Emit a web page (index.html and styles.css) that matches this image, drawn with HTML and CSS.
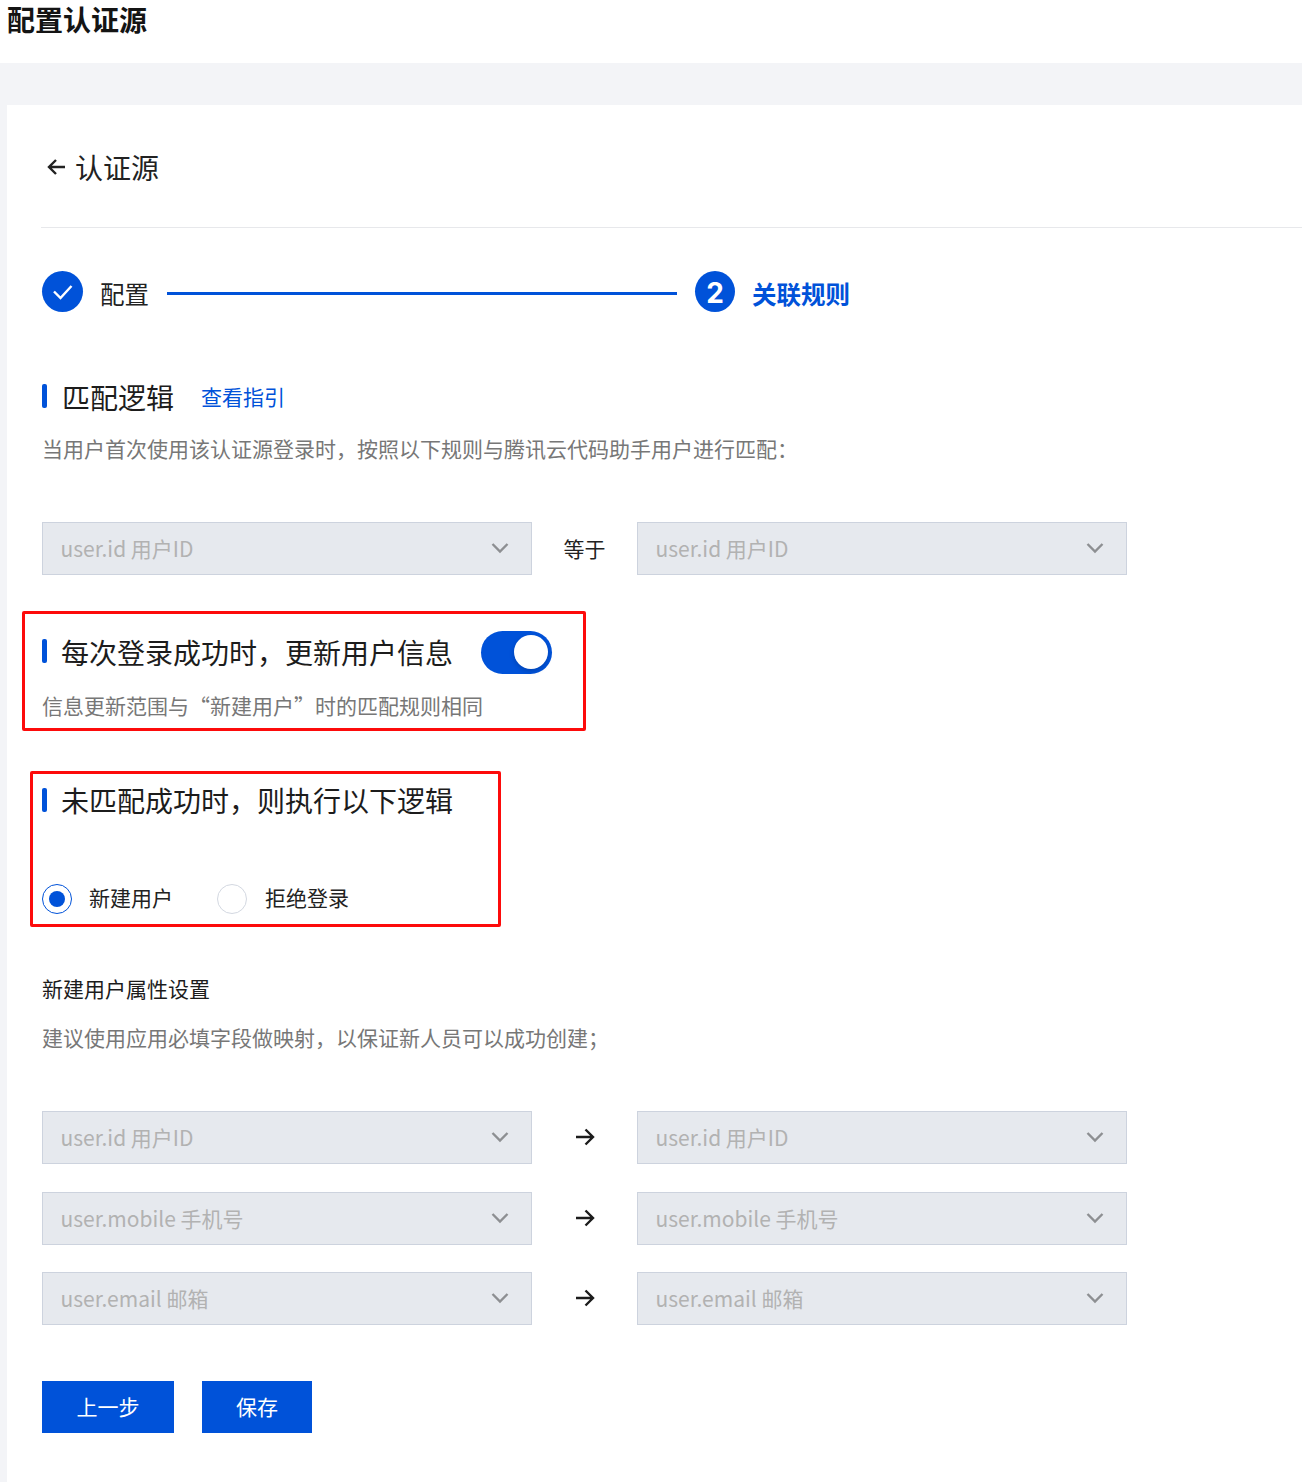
FILE: index.html
```html
<!DOCTYPE html>
<html lang="zh-CN">
<head>
<meta charset="utf-8">
<title>配置认证源</title>
<link rel="stylesheet" href="styles.css">
</head>
<body>
<header class="page-head"><h1 class="page-title">配置认证源</h1></header>
<main class="shell">
  <div class="card">
    <div class="back-row">
      <svg class="back-icon" viewBox="0 0 20 20" width="20" height="20"><path d="M19 10H2.500M10 3L3 10l7 7" fill="none" stroke="#222" stroke-width="2.400"/></svg>
      <span class="back-text">认证源</span>
    </div>
    <div class="steps">
      <span class="step-dot"><svg viewBox="0 0 41 41" width="41" height="41"><path d="M12 20.500l6.500 6.500L29.500 15" fill="none" stroke="#fff" stroke-width="2.400"/></svg></span>
      <span class="step-label">配置</span>
      <span class="step-line"></span>
      <span class="step-dot step-num">2</span>
      <span class="step-label step-active">关联规则</span>
    </div>

    <div class="section-head first-head">
      <span class="bar"></span><h2 class="section-title">匹配逻辑</h2><a class="guide">查看指引</a>
    </div>
    <p class="desc desc-match">当用户首次使用该认证源登录时，按照以下规则与腾讯云代码助手用户进行匹配：</p>
    <div class="map-row row-match">
      <div class="select"><span>user.id 用户ID</span><svg class="chev" viewBox="0 0 18 12" width="18" height="12"><path d="M1.500 2l7.500 7.500L16.500 2" /></svg></div>
      <span class="map-op op-text">等于</span>
      <div class="select"><span>user.id 用户ID</span><svg class="chev" viewBox="0 0 18 12" width="18" height="12"><path d="M1.500 2l7.500 7.500L16.500 2" /></svg></div>
    </div>

    <section class="update-block">
      <div class="section-head">
        <span class="bar"></span><h2 class="section-title">每次登录成功时，更新用户信息</h2><span class="toggle"><span class="knob"></span></span>
      </div>
      <p class="desc desc-update">信息更新范围与“新建用户”时的匹配规则相同</p>
      <span class="mark mark-update"></span>
    </section>

    <section class="fail-block">
      <div class="section-head">
        <span class="bar"></span><h2 class="section-title">未匹配成功时，则执行以下逻辑</h2>
      </div>
      <div class="radios">
        <span class="radio radio-on"></span><span class="radio-text">新建用户</span>
        <span class="radio radio-off"></span><span class="radio-text">拒绝登录</span>
      </div>
      <span class="mark mark-fail"></span>
    </section>

    <h3 class="sub-title">新建用户属性设置</h3>
    <p class="desc desc-attr">建议使用应用必填字段做映射，以保证新人员可以成功创建；</p>

    <div class="map-list">
      <div class="map-row">
        <div class="select"><span>user.id 用户ID</span><svg class="chev" viewBox="0 0 18 12" width="18" height="12"><path d="M1.500 2l7.500 7.500L16.500 2" /></svg></div>
        <span class="map-op"><svg class="arrow" viewBox="0 0 20 18" width="20" height="18"><path d="M1 9h17M10.500 1.500L18 9l-7.500 7.500" fill="none" stroke="#1c1c1c" stroke-width="2.400"/></svg></span>
        <div class="select"><span>user.id 用户ID</span><svg class="chev" viewBox="0 0 18 12" width="18" height="12"><path d="M1.500 2l7.500 7.500L16.500 2" /></svg></div>
      </div>
      <div class="map-row">
        <div class="select"><span>user.mobile 手机号</span><svg class="chev" viewBox="0 0 18 12" width="18" height="12"><path d="M1.500 2l7.500 7.500L16.500 2" /></svg></div>
        <span class="map-op"><svg class="arrow" viewBox="0 0 20 18" width="20" height="18"><path d="M1 9h17M10.500 1.500L18 9l-7.500 7.500" fill="none" stroke="#1c1c1c" stroke-width="2.400"/></svg></span>
        <div class="select"><span>user.mobile 手机号</span><svg class="chev" viewBox="0 0 18 12" width="18" height="12"><path d="M1.500 2l7.500 7.500L16.500 2" /></svg></div>
      </div>
      <div class="map-row">
        <div class="select"><span>user.email 邮箱</span><svg class="chev" viewBox="0 0 18 12" width="18" height="12"><path d="M1.500 2l7.500 7.500L16.500 2" /></svg></div>
        <span class="map-op"><svg class="arrow" viewBox="0 0 20 18" width="20" height="18"><path d="M1 9h17M10.500 1.500L18 9l-7.500 7.500" fill="none" stroke="#1c1c1c" stroke-width="2.400"/></svg></span>
        <div class="select"><span>user.email 邮箱</span><svg class="chev" viewBox="0 0 18 12" width="18" height="12"><path d="M1.500 2l7.500 7.500L16.500 2" /></svg></div>
      </div>
    </div>

    <div class="actions">
      <button class="btn btn-prev">上一步</button>
      <button class="btn btn-save">保存</button>
    </div>
  </div>
</main>
</body>
</html>
```
FILE: styles.css
```css
* { box-sizing: border-box; }
html, body { margin: 0; padding: 0; }
body {
  background: #fff;
  color: #1c1c1c;
  font-family: "Noto Sans CJK SC", "Noto Sans", sans-serif;
  font-size: 21px;
  width: 1302px;
  height: 1482px;
  overflow: hidden;
}
h1, h2, h3, p { margin: 0; font-weight: 400; }

.page-head { height: 63px; padding-left: 7px; }
.page-title { font-size: 28px; line-height: 38px; font-weight: 700; color: #141414; }

.shell { background: #f3f4f7; padding: 42px 0 0 7px; height: 1419px; }
.card { background: #fff; height: 1377px; padding-left: 34px; }

.back-row {
  height: 123px;
  display: flex;
  align-items: center;
  gap: 9px;
  padding: 3px 0 0 5px;
  border-bottom: 1px solid #e7e8eb;
  margin-bottom: 43px;
}
.back-icon { flex: none; margin-top: -1px; }
.back-text { font-size: 28px; line-height: 42px; color: #222; margin-top: -2px; }

.steps { display: flex; align-items: center; height: 41px; padding-left: 1px; }
.step-dot {
  width: 41px; height: 41px; border-radius: 50%;
  background: #0052d9; color: #fff;
  display: flex; align-items: center; justify-content: center; flex: none;
}
.step-num { width: 40px; padding-top: 4px; font-family: "Inter", "Noto Sans", sans-serif; font-size: 28px; font-weight: 700; line-height: 37px; }
.step-label { font-size: 24.500px; line-height: 41px; margin-left: 17px; color: #222; position: relative; top: 2px; }
.step-active { color: #0052d9; font-weight: 700; }
.step-line { width: 510px; height: 3px; background: #0052d9; margin: 3px 18px 0; }

.section-head { display: flex; align-items: center; height: 42px; position: relative; padding-left: 1px; }
.first-head { margin-top: 65px; }
.bar { width: 5px; height: 24px; background: #0052d9; border-radius: 2px; flex: none; margin-right: 14px; margin-top: -4px; }
.first-head .bar { margin-right: 15px; }
.section-title { font-size: 28px; line-height: 42px; color: #1c1c1c; white-space: nowrap; margin-top: -3px; }
.fail-block .section-title { margin-top: -5px; }
.guide { font-size: 21px; color: #0052d9; margin-left: 27px; line-height: 32px; margin-top: -4px; }

.desc { font-size: 21px; line-height: 32px; color: #777; padding-left: 1px; white-space: nowrap; }
.desc-match { margin-top: 13px; }

.map-row { display: flex; align-items: stretch; height: 53px; padding-left: 1px; }
.row-match { margin-top: 58px; }
.select {
  width: 490px; height: 100%;
  background: #e6e9ee;
  border: 1px solid #cdd3de;
  display: flex; align-items: center; justify-content: space-between;
  padding: 0 22px 1px 17.500px;
  color: #b2b2b2;
  font-size: 21px;
}
.chev { fill: none; stroke: #8d8f92; stroke-width: 2.400; margin-top: 0; }
.map-op { width: 105px; display: flex; align-items: center; justify-content: center; flex: none; }
.arrow { margin-top: -1px; }
.op-text { font-size: 21px; color: #222; padding-bottom: 2px; }

.update-block { position: relative; margin-top: 57px; height: 110px; }
.toggle {
  width: 71px; height: 43px; border-radius: 22px;
  background: #0052d9; margin-left: 28px; margin-top: -2px; flex: none;
  display: flex; align-items: center; justify-content: flex-end; padding-right: 4px;
}
.knob { width: 34px; height: 34px; border-radius: 50%; background: #fff; box-shadow: 0 2px 5px rgba(0, 0, 0, .18); }
.desc-update { margin-top: 15px; }

.mark { position: absolute; border: 3px solid #fd0b0b; border-radius: 2px; pointer-events: none; }
.mark-update { left: -19px; top: -21px; width: 564px; height: 120px; }

.fail-block { position: relative; margin-top: 39px; height: 156px; }
.radios { display: flex; align-items: center; height: 32px; margin-top: 60px; padding-left: 1px; }
.radio { width: 30px; height: 30px; border-radius: 50%; flex: none; background: #fff; }
.radio-on { border: 1px solid #0052d9; display: flex; align-items: center; justify-content: center; }
.radio-on::after { content: ""; width: 16px; height: 16px; border-radius: 50%; background: #0052d9; }
.radio-off { border: 1px solid #d3d8e1; margin-right: 1px; }
.radio-text { font-size: 21px; line-height: 32px; margin: -4px 44px 0 17px; color: #222; }
.mark-fail { left: -11px; top: -10px; width: 471px; height: 156px; }

.sub-title { font-size: 21px; line-height: 32px; color: #1c1c1c; padding-left: 1px; margin-top: 35px; }
.desc-attr { margin-top: 17px; }

.map-list { margin-top: 58px; display: flex; flex-direction: column; gap: 27.500px; }

.actions { display: flex; gap: 28px; margin-top: 56px; padding-left: 1px; }
.btn {
  height: 52px; border: 0; border-radius: 0;
  background: #0052d9; color: #fff;
  font: inherit; font-size: 21px; padding: 0 0 2px;
}
.btn-prev { width: 132px; }
.btn-save { width: 110px; }
```
